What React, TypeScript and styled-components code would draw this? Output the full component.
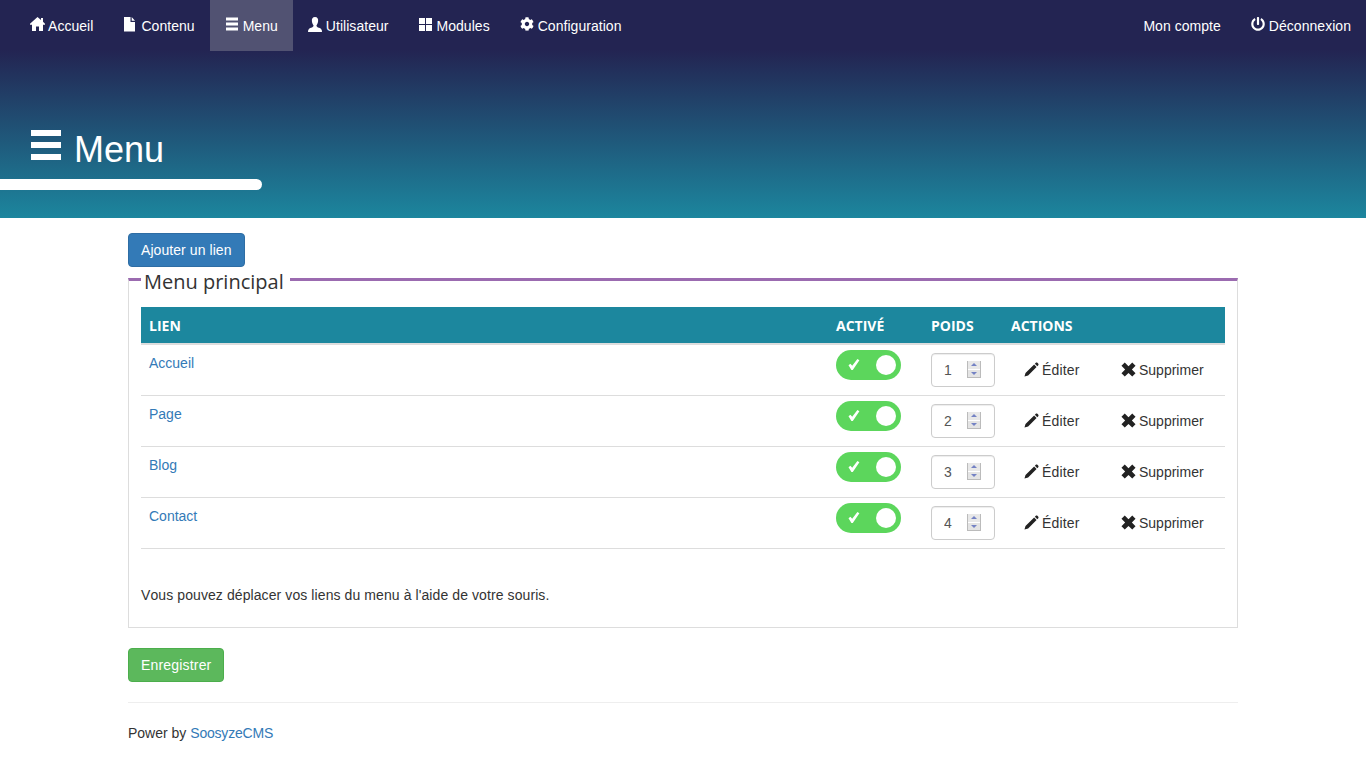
import React from 'react';
import styled, { createGlobalStyle } from 'styled-components';
import { FaCog, FaPowerOff } from 'react-icons/fa';

const GlobalStyle = createGlobalStyle`
	* { box-sizing: border-box; }
	body {
		margin: 0;
		background: #fff;
		color: #333;
		font-family: "Liberation Sans", Arial, sans-serif;
		font-size: 14px;
		line-height: 20px;
		font-kerning: none;
	}
`;

const HomeIcon = () => (
	<Glyph viewBox="0 0 14 14"><path d="M7.5 0 L11 3 V1 H13 V4.8 L15 6.8 V7.8 H13 V14 H9 V9.5 H6 V14 H2 V7.8 H0 V6.8 Z" /></Glyph>
);
const FileIcon = () => (
	<Glyph viewBox="0 0 14 14"><path d="M1 0 H7.5 V5 H12 V14.5 H1 Z M8.7 0 L12 3.8 H8.7 Z" /></Glyph>
);
const NavBarsIcon = () => (
	<Glyph viewBox="0 0 14 14"><path d="M1 0.5 H13 V3.5 H1 Z M1 5.5 H13 V8.5 H1 Z M1 10.5 H13 V13.5 H1 Z" /></Glyph>
);
const UserIcon = () => (
	<Glyph viewBox="0 0 14 14"><path d="M7 0 C9.4 0 10.4 1.8 10.1 4.2 C9.9 6 9.3 7.3 8.5 8.2 C8.4 9.6 9.4 10.2 11 10.8 C13 11.5 14 12.4 14 15 H0 C0 12.4 1 11.5 3 10.8 C4.6 10.2 5.6 9.6 5.5 8.2 C4.7 7.3 4.1 6 3.9 4.2 C3.6 1.8 4.6 0 7 0 Z" /></Glyph>
);
const ModulesIcon = () => (
	<Glyph viewBox="0 0 14 14"><path d="M0 1 H6 V7 H0 Z M7 1 H13 V7 H7 Z M0 8 H6 V14 H0 Z M7 8 H13 V14 H7 Z" /></Glyph>
);
const PencilIcon = () => (
	<ActionGlyph viewBox="0 0 16 16"><path d="M0.5 15.5 L1.6 11.6 L10.8 2.6 L13.4 5.2 L4.4 14.4 Z M11.6 1.8 L12.6 0.8 C13.1 0.3 13.8 0.4 14.3 0.9 L15.1 1.7 C15.6 2.2 15.7 2.9 15.2 3.4 L14.2 4.4 Z" /></ActionGlyph>
);
const RemoveIcon = () => (
	<ActionGlyph viewBox="0 0 16 16"><path d="M4 0.5 L8 4.4 L12 0.5 L15.5 4 L11.6 8 L15.5 12 L12 15.5 L8 11.6 L4 15.5 L0.5 12 L4.4 8 L0.5 4 Z" /></ActionGlyph>
);

const navLeft = [
	{ label: 'Accueil', icon: <HomeIcon /> },
	{ label: 'Contenu', icon: <FileIcon /> },
	{ label: 'Menu', icon: <NavBarsIcon />, active: true },
	{ label: 'Utilisateur', icon: <UserIcon /> },
	{ label: 'Modules', icon: <ModulesIcon /> },
	{ label: 'Configuration', icon: <FaCog size={14} /> },
];

const links = ['Accueil', 'Page', 'Blog', 'Contact'];

const App = () => {
	return (
		<>
			<GlobalStyle />
			<Header>
				<Navbar>
					<NavGroup>
						{navLeft.map((item) => (
							<NavLink key={item.label} href="#" $active={item.active}>
								<NavIcon>{item.icon}</NavIcon>
								{item.label}
							</NavLink>
						))}
					</NavGroup>
					<NavGroup>
						<NavLink href="#">Mon compte</NavLink>
						<NavLink href="#">
							<NavIcon><FaPowerOff size={14} /></NavIcon>
							Déconnexion
						</NavLink>
					</NavGroup>
				</Navbar>
				<Title>
					<TitleGlyph viewBox="0 0 30 30"><path d="M0 0 H30 V6 H0 Z M0 12 H30 V18 H0 Z M0 24 H30 V30 H0 Z" /></TitleGlyph>
					Menu
				</Title>
				<TitleBar />
			</Header>
			<Container>
				<Button $color="blue">Ajouter un lien</Button>
				<Fieldset>
					<Legend>Menu principal</Legend>
					<Table>
						<colgroup>
							<col width="687" />
							<col width="95" />
							<col width="80" />
							<col width="98" />
							<col width="124" />
						</colgroup>
						<thead>
							<tr>
								<Th>Lien</Th>
								<Th>Activé</Th>
								<Th>Poids</Th>
								<Th colSpan={2}>Actions</Th>
							</tr>
						</thead>
						<tbody>
							{links.map((link, i) => (
								<tr key={link}>
									<Td><RowLink href="#">{link}</RowLink></Td>
									<Td>
										<Switch>
											<SwitchCheck viewBox="0 0 12 11"><path d="M0.5 6.2 L2.4 4.8 L4.2 6.8 L9.4 0 L11.4 1.2 L4.8 11 L3.4 11 Z" /></SwitchCheck>
											<SwitchKnob />
										</Switch>
									</Td>
									<Td>
										<WeightField>
											<WeightInput type="number" defaultValue={i + 1} />
											<Spinner>
												<SpinButton $up />
												<SpinButton />
											</Spinner>
										</WeightField>
									</Td>
									<Td>
										<EditLink href="#"><PencilIcon /> Éditer</EditLink>
									</Td>
									<Td>
										<ActionLink href="#"><RemoveIcon /> Supprimer</ActionLink>
									</Td>
								</tr>
							))}
						</tbody>
					</Table>
					<Help>Vous pouvez déplacer vos liens du menu à l'aide de votre souris.</Help>
				</Fieldset>
				<Button $color="green">Enregistrer</Button>
				<Footer>
					Power by <FooterLink href="#">SoosyzeCMS</FooterLink>
				</Footer>
			</Container>
		</>
	);
};

const Glyph = styled.svg`
	display: block;
	width: 14px;
	height: 14px;
	overflow: visible;
	fill: currentColor;
`;

const TitleGlyph = styled.svg`
	display: block;
	align-self: flex-start;
	width: 30px;
	height: 30px;
	fill: currentColor;
`;

const ActionGlyph = styled.svg`
	display: block;
	width: 15px;
	height: 15px;
	margin-top: -2px;
	fill: #222;
`;

const Header = styled.header`
	height: 218px;
	background: linear-gradient(to bottom, #232452 0, #232452 50px, #1c869e 218px);
	color: #fff;
`;

const Navbar = styled.nav`
	display: flex;
	justify-content: space-between;
	padding-left: 15px;
`;

const NavGroup = styled.div`
	display: flex;
`;

const NavLink = styled.a<{ $active?: boolean }>`
	display: flex;
	align-items: center;
	height: 51px;
	padding: 0 15px;
	color: #fff;
	letter-spacing: 0.04px;
	text-decoration: none;
	background: ${(p) => (p.$active ? '#515272' : 'transparent')};
`;

const NavIcon = styled.span`
	display: inline-flex;
	width: 14px;
	margin: -3px 4px 0 0;
`;

const Title = styled.h1`
	display: flex;
	align-items: center;
	gap: 13px;
	height: 40px;
	margin: 79px 0 9px 31px;
	font-size: 36px;
	font-weight: 400;
	line-height: 40px;
`;

const TitleBar = styled.div`
	width: 262px;
	height: 11px;
	background: #fff;
	border-radius: 0 6px 6px 0;
`;

const Container = styled.main`
	width: 1110px;
	margin: 15px auto 0;
`;

const Button = styled.button<{ $color: 'blue' | 'green' }>`
	display: block;
	height: 34px;
	padding: 6px 12px;
	color: #fff;
	font: 14px/20px "Liberation Sans", Arial, sans-serif;
	font-kerning: none;
	letter-spacing: ${(p) => (p.$color === 'blue' ? '0.07px' : '0.18px')};
	background: ${(p) => (p.$color === 'blue' ? '#337ab7' : '#5cb85c')};
	border: 1px solid ${(p) => (p.$color === 'blue' ? '#2e6da4' : '#4cae4c')};
	border-radius: 4px;
`;

const Fieldset = styled.fieldset`
	margin: -5px 0 20px;
	padding: 0 12px 22px;
	border: 1px solid #ddd;
	border-top: 3px solid #9b6bb0;
	min-width: 0;
`;

const Legend = styled.legend`
	padding: 6px 6px 0 3px;
	color: #333;
	font-family: "Open Sans", sans-serif;
	font-size: 20px;
	line-height: 28px;
`;

const Table = styled.table`
	width: 1084px;
	margin-top: 11px;
	border-collapse: separate;
	border-spacing: 0;
	table-layout: fixed;
`;

const Th = styled.th`
	height: 38px;
	padding: 2px 8px 0;
	color: #fff;
	font-family: "Open Sans", sans-serif;
	font-size: 14px;
	font-weight: 700;
	text-align: left;
	text-transform: uppercase;
	background: #1c879e;
	border-bottom: 2px solid #ddd;
`;

const Td = styled.td`
	height: 51px;
	padding: 8px;
	vertical-align: top;
	border-bottom: 1px solid #ddd;
`;

const RowLink = styled.a`
	color: #337ab7;
	text-decoration: none;
`;

const Switch = styled.span`
	display: block;
	position: relative;
	width: 65px;
	height: 30px;
	margin: -3px 0 7px;
	background: #5cd65c;
	border-radius: 15px;
`;

const SwitchCheck = styled.svg`
	position: absolute;
	left: 12px;
	top: 9px;
	width: 12px;
	height: 11px;
	fill: #fff;
`;

const SwitchKnob = styled.span`
	position: absolute;
	right: 5px;
	top: 5px;
	width: 20px;
	height: 20px;
	background: #fff;
	border-radius: 50%;
`;

const WeightField = styled.div`
	position: relative;
	width: 64px;
	height: 34px;
`;

const WeightInput = styled.input`
	display: block;
	width: 100%;
	height: 100%;
	padding: 6px 12px;
	color: #555;
	font: 14px/20px "Liberation Sans", Arial, sans-serif;
	background: #fff;
	border: 1px solid #ccc;
	border-radius: 4px;
	box-shadow: inset 0 1px 1px rgba(0, 0, 0, 0.075);
	appearance: textfield;
	&::-webkit-inner-spin-button,
	&::-webkit-outer-spin-button {
		appearance: none;
	}
`;

const Spinner = styled.div`
	position: absolute;
	top: 8px;
	right: 14px;
	display: flex;
	flex-direction: column;
	gap: 1px;
	width: 14px;
	height: 17px;
	background: #fff;
	border: solid #bbb;
	border-width: 0 1px 1px;
`;

const SpinButton = styled.span<{ $up?: boolean }>`
	flex: 1;
	display: flex;
	align-items: center;
	justify-content: center;
	background: ${(p) => (p.$up ? '#e8e8e8' : '#e4e4e4')};
	&::before {
		content: "";
		border-left: 3px solid transparent;
		border-right: 3px solid transparent;
		border-bottom: ${(p) => (p.$up ? '3px solid #7482c4' : '0')};
		border-top: ${(p) => (p.$up ? '0' : '3px solid #7482c4')};
	}
`;

const ActionLink = styled.a`
	display: inline-flex;
	align-items: center;
	gap: 3px;
	height: 34px;
	padding: 0 12px;
	color: #333;
	text-decoration: none;
	white-space: nowrap;
`;

const EditLink = styled(ActionLink)`
	padding-left: 13px;
	letter-spacing: 0.15px;
`;

const Help = styled.p`
	margin: 36px 0 0;
	letter-spacing: 0.09px;
`;

const Footer = styled.footer`
	margin-top: 20px;
	padding-top: 20px;
	border-top: 1px solid #eee;
`;

const FooterLink = styled.a`
	color: #337ab7;
	letter-spacing: -0.2px;
	text-decoration: none;
`;

export default App;
